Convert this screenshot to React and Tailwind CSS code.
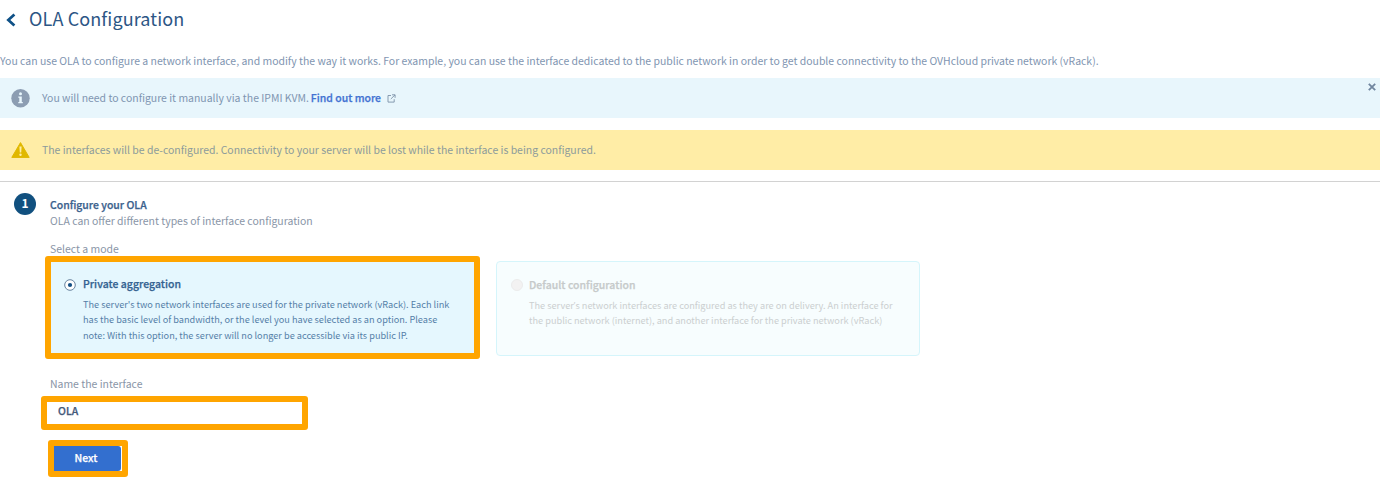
import React from "react";

function InfoIcon() {
  return (
    <svg className="size-[19px] shrink-0" viewBox="0 0 19 19">
      <circle cx="9.5" cy="9.2" r="9.2" fill="#8c9db2" />
      <circle cx="9.5" cy="4.7" r="1.5" fill="#e8f6fc" />
      <path d="M7.3 7.4h3.5V13h1v1.3H7.3V13h1V8.7h-1z" fill="#e8f6fc" />
    </svg>
  );
}

function WarningIcon() {
  return (
    <svg className="size-[19px] shrink-0" viewBox="0 0 19 19">
      <path d="M9.5 1.6 18.2 16.4H.8z" fill="#e0b800" stroke="#e0b800" strokeWidth="1" strokeLinejoin="round" />
      <path d="M8.4 5.6h2.2l-.4 6H8.8z" fill="#ffeda6" />
      <circle cx="9.5" cy="13.8" r="1.2" fill="#ffeda6" />
    </svg>
  );
}

function ExternalIcon() {
  return (
    <svg className="ml-[6px] size-[9px]" viewBox="0 0 9 9" fill="none" stroke="#7d92a8" strokeWidth="0.9">
      <path d="M4 1.5H1v6.6h6.2V5.2M5 .8h3.1v3M8 .9 3.8 5" />
    </svg>
  );
}

export default function App() {
  return (
    <div className="h-[486px] w-[1380px] overflow-hidden bg-white font-['Noto_Sans_CJK_SC',sans-serif] text-[10.46px] whitespace-nowrap text-[#7f95b1]">
      <header className="flex h-[38px] items-center pl-[6px] text-[#2c5685]">
        <svg className="mt-[1px] h-[14px] w-[10px]" viewBox="0 0 10 14" fill="none" stroke="#0f5187" strokeWidth="2.7">
          <path d="M8.4 1.4 2.3 7l6.1 5.6" />
        </svg>
        <h1 className="ml-[13px] pb-[2px] text-[18px] leading-[36px] tracking-[0.12px]">OLA Configuration</h1>
      </header>

      <p className="mt-[13px] h-[27px] leading-[20px]">
        You can use OLA to configure a network interface, and modify the way it works. For example, you can use the interface dedicated to the public network in order to get double connectivity to the OVHcloud private network (vRack).
      </p>

      <div className="flex h-[40px] items-center bg-[#e8f6fc] pl-[11px]">
        <InfoIcon />
        <p className="ml-[12px]">You will need to configure it manually via the IPMI KVM.</p>
        <a className="ml-[2px] font-medium text-[#4272d2] [-webkit-text-stroke:0.25px]">Find out more</a>
        <ExternalIcon />
        <button className="mr-[4px] mb-[23px] ml-auto">
          <svg className="size-[8px]" viewBox="0 0 8 8" stroke="#71869f" strokeWidth="1.8">
            <path d="M.8.8 7.2 7.2M7.2.8.8 7.2" />
          </svg>
        </button>
      </div>

      <div className="mt-[12px] flex h-[40px] items-center bg-[#ffeda6] pl-[11px] text-[#8c9b9b]">
        <WarningIcon />
        <p className="ml-[12px]">
          The interfaces will be de-configured. Connectivity to your server will be lost while the interface is being configured.
        </p>
      </div>

      <section className="mt-[11px] flex border-t border-[#d2d2d2] pt-[11px] pl-[14px]">
        <span className="flex size-[22px] items-center justify-center rounded-full bg-[#11507f] pb-[2px] text-[12px] font-bold text-white">
          1
        </span>
        <div className="ml-[14px] flex flex-col pt-[4px] text-[#8995a7]">
          <h2 className="leading-[16px] font-medium text-[#3b618d] [-webkit-text-stroke:0.25px]">Configure your OLA</h2>
          <p className="leading-[16px]">OLA can offer different types of interface configuration</p>
          <p className="mt-[12px] h-[15px] leading-[16px]">Select a mode</p>

          <div className="-ml-[5px] flex items-start">
            <label className="flex h-[103px] w-[435px] rounded-[3px] border-[6px] border-[#ffa500] bg-[#e5f7fe] pt-[15px] pl-[13px] text-[#557fa8]">
              <svg className="mt-[2px] size-[12px]" viewBox="0 0 12 12">
                <circle cx="6" cy="6" r="5.3" fill="#fff" stroke="#67839f" strokeWidth="1" />
                <circle cx="6" cy="6" r="2.1" fill="#124f84" />
              </svg>
              <span className="ml-[7px] flex flex-col">
                <b className="leading-[14px] font-medium tracking-[0.03px] text-[#346291] [-webkit-text-stroke:0.25px]">Private aggregation</b>
                <span className="mt-[6px] text-[9.18px] leading-[15.3px]">
                  The server's two network interfaces are used for the private network (vRack). Each link<br />
                  has the basic level of bandwidth, or the level you have selected as an option. Please<br />
                  note: With this option, the server will no longer be accessible via its public IP.
                </span>
              </span>
            </label>
            <label className="mt-[5px] ml-[16px] flex h-[95px] w-[424px] rounded-[4px] border border-[#d5f5fb] bg-[#f7fdfe] pt-[16px] pl-[14px] text-[#cbcfd0]">
              <span className="mt-[1px] size-[12px] rounded-full border border-[#ececec] bg-[#f3f2f2]" />
              <span className="ml-[6px] flex flex-col">
                <b className="leading-[14px] font-medium tracking-[0.03px] text-[#c6caca] [-webkit-text-stroke:0.25px]">Default configuration</b>
                <span className="mt-[6px] text-[9.2px] leading-[15.3px]">
                  The server<span className="font-['Open_Sans',sans-serif]">’</span>s network interfaces are configured as they are on delivery. An interface for<br />
                  the public network (internet), and another interface for the private network (vRack)
                </span>
              </span>
            </label>
          </div>

          <p className="mt-[17px] h-[15px] leading-[16px]">Name the interface</p>
          <input
            defaultValue="OLA"
            className="mt-[5px] -ml-[9px] h-[34px] w-[267px] rounded-[3px] border-[6px] border-[#ffa500] bg-white pb-[6px] pl-[11px] font-medium text-[#44597a] outline-none [-webkit-text-stroke:0.25px]"
          />
          <div className="mt-[10px] -ml-[2px] h-[37px] w-[80px] rounded-[3px] border-[6px] border-[#ffa500] bg-white">
            <button className="flex h-[25px] w-[67px] items-center justify-center rounded-r-[3px] bg-[#336fcf] pr-[3px] pb-[2px] font-medium text-white [-webkit-text-stroke:0.25px]">
              Next
            </button>
          </div>
        </div>
      </section>
    </div>
  );
}
